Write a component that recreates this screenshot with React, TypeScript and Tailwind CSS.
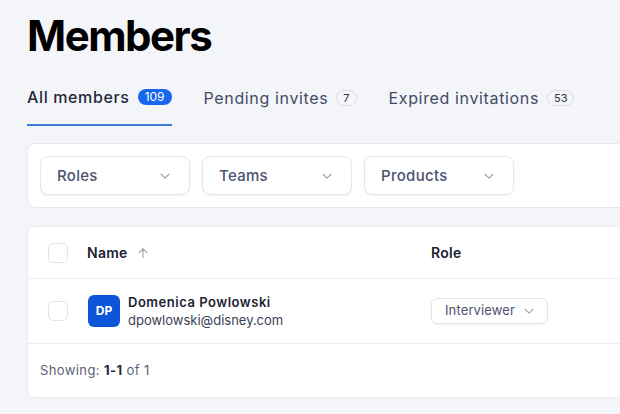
import React from 'react';

const Chevron = ({ className }: { className?: string }) => (
  <svg viewBox="0 0 16 16" fill="none" stroke="currentColor" strokeWidth="1.3" strokeLinecap="round" strokeLinejoin="round" className={className}>
    <path d="M3.5 6l4.5 4.5L12.5 6" />
  </svg>
);

const ArrowUp = ({ className }: { className?: string }) => (
  <svg viewBox="0 0 16 16" fill="none" stroke="currentColor" strokeWidth="1.4" strokeLinecap="round" strokeLinejoin="round" className={className}>
    <path d="M8 13V3M3.5 7.5L8 3l4.5 4.5" />
  </svg>
);

const FilterSelect = ({ label }: { label: string }) => (
  <div className="flex h-[39px] w-[150px] items-center justify-between rounded-lg border border-[#e3e6ec] bg-white pl-4 pr-[17px] shadow-[0_1px_2px_rgba(20,30,60,0.06)]">
    <span className="pt-[2px] text-[15px] font-medium tracking-[0.02em] text-[#4c5270]">{label}</span>
    <Chevron className="h-[14px] w-[14px] text-[#9aa0ae]" />
  </div>
);

const Checkbox = () => (
  <div className="h-5 w-5 rounded-[5px] border border-[#e1e4ea] bg-white" />
);

export default function App() {
  return (
    <div className="h-[414px] w-[620px] overflow-hidden bg-[#f4f5f9] font-['Inter',sans-serif]">
      <div className="w-[760px]">
        <h1 className="pl-[27px] pt-[10px] text-[42px] font-bold leading-[52px] tracking-[-0.035em] text-black">Members</h1>

        <div className="mt-[22px] flex gap-8 pl-[27px]">
          <div className="flex items-center gap-2 border-b-2 border-[#3a7bd5] pb-[15px] pt-[1px]">
            <span className="text-[16px] font-medium tracking-[0.04em] text-[#23283b]">All members</span>
            <span className="rounded-full bg-[#1766ee] px-[7px] text-[12px] leading-4 text-white">109</span>
          </div>
          <div className="flex items-center gap-2 pb-[15px] pt-[1px]">
            <span className="text-[16px] tracking-[0.04em] text-[#434a66]">Pending invites</span>
            <span className="rounded-full border border-[#dcdfe6] bg-[#f4f5f9] px-[6px] text-[11px] leading-[14px] text-[#2d3247]">7</span>
          </div>
          <div className="flex items-center gap-2 pb-[15px] pt-[1px]">
            <span className="text-[16px] tracking-[0.04em] text-[#434a66]">Expired invitations</span>
            <span className="rounded-full border border-[#dcdfe6] bg-[#f4f5f9] px-[6px] text-[11px] leading-[14px] text-[#2d3247]">53</span>
          </div>
        </div>

        <div className="ml-[27px] mt-[17px] flex h-[65px] items-center gap-3 rounded-lg border border-[#e6e8ee] bg-white px-3">
          <FilterSelect label="Roles" />
          <FilterSelect label="Teams" />
          <FilterSelect label="Products" />
        </div>

        <div className="ml-[27px] mt-[18px] rounded-lg border border-[#eceef2] bg-white">
          <div className="flex h-[52px] items-center border-b border-[#eceef2] px-5">
            <Checkbox />
            <div className="ml-[19px] flex w-[344px] items-center gap-2">
              <span className="text-[14px] font-semibold tracking-[0.02em] text-[#1d2233]">Name</span>
              <ArrowUp className="h-[14px] w-[14px] text-[#a3a8b4]" />
            </div>
            <span className="text-[14px] font-semibold tracking-[0.02em] text-[#1d2233]">Role</span>
          </div>

          <div className="flex h-[65px] items-center border-b border-[#eceef2] px-5">
            <Checkbox />
            <div className="ml-5 flex w-[343px] items-center gap-2">
              <div className="flex h-8 w-8 items-center justify-center rounded-md bg-[#0d55d8] text-[12px] font-bold text-white">DP</div>
              <div className="flex flex-col">
                <span className="text-[13px] font-semibold leading-[18px] tracking-[0.04em] text-[#1d2233]">Domenica Powlowski</span>
                <span className="text-[13px] leading-[18px] text-[#3b4156]">dpowlowski@disney.com</span>
              </div>
            </div>
            <div className="flex h-[26px] w-[117px] items-center justify-between rounded-md border border-[#e3e6ec] bg-white pl-[13px] pr-[11px] shadow-[0_1px_2px_rgba(20,30,60,0.06)]">
              <span className="text-[13px] tracking-[0.01em] text-[#4c5270]">Interviewer</span>
              <Chevron className="h-[14px] w-[14px] text-[#a3a8b4]" />
            </div>
          </div>

          <div className="flex h-[53px] items-center px-3">
            <span className="text-[13px] tracking-[0.03em] text-[#5b6178]">
              Showing: <span className="font-bold text-[#23283b]">1-1</span> of 1
            </span>
          </div>
        </div>
      </div>
    </div>
  );
}
